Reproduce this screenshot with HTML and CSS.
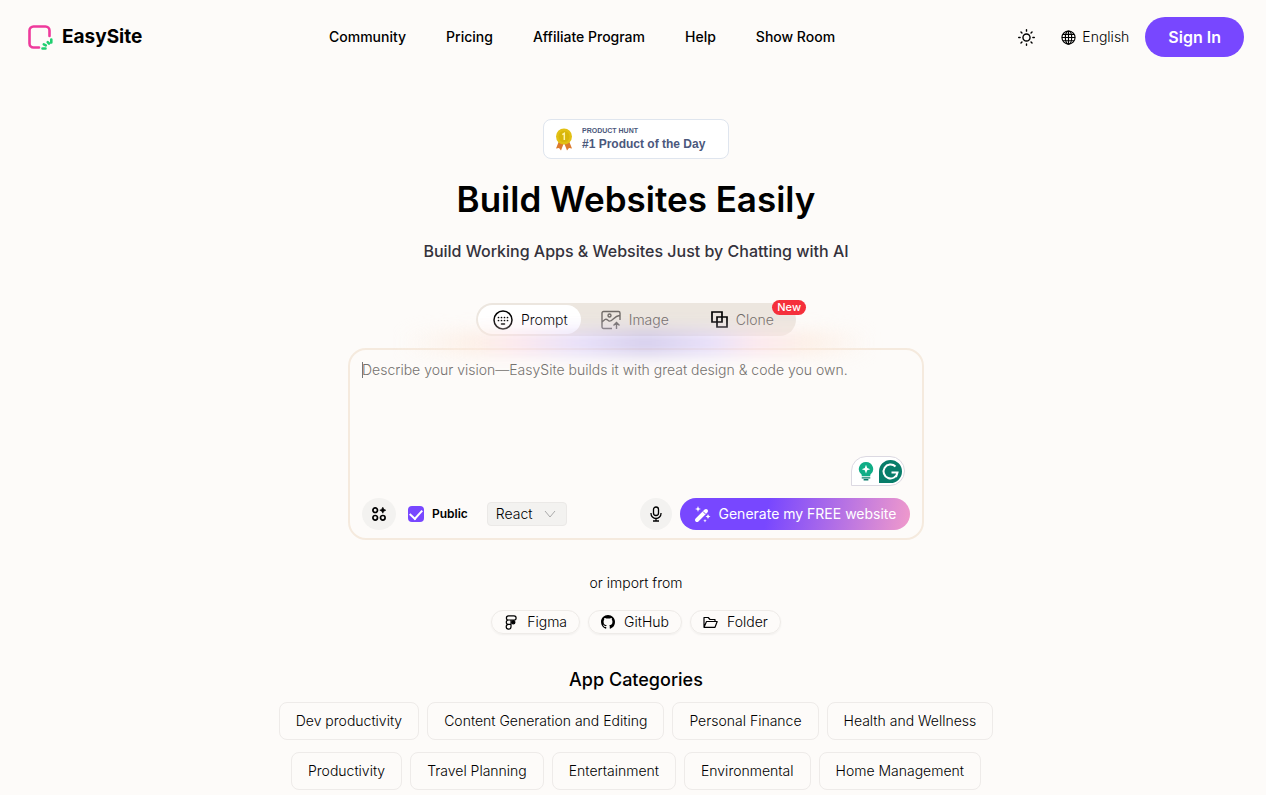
FILE: index.html
```html
<!DOCTYPE html>
<html lang="en">
<head>
<meta charset="utf-8">
<meta name="viewport" content="width=device-width, initial-scale=1">
<title>EasySite</title>
<link rel="stylesheet" href="styles.css">
</head>
<body>
<header class="header">
  <a class="logo" href="#">
    <svg width="26" height="26" viewBox="0 0 26 26" fill="none" stroke-linecap="round" stroke-width="2.600">
      <path stroke="#ee3a9c" d="M11 23.500H5.500A4 4 0 0 1 1.500 19.500V6.500A4 4 0 0 1 5.500 2.500H17.500a4 4 0 0 1 4 4V12"/>
      <path stroke="#20cf70" d="M23.300 15.500v3M14.500 24.500h3M19.700 18.200l1.300 1.300M15.800 20.300l2 1"/>
    </svg>
    <span>EasySite</span>
  </a>
  <nav class="nav">
    <a href="#">Community</a>
    <a href="#">Pricing</a>
    <a href="#">Affiliate Program</a>
    <a href="#">Help</a>
    <a href="#">Show Room</a>
  </nav>
  <div class="actions">
    <button class="plain" type="button" aria-label="Toggle theme">
      <svg width="17" height="17" viewBox="0 0 24 24" fill="none" stroke="#000" stroke-width="2" stroke-linecap="round"><circle cx="12" cy="12" r="5"/><path d="M12 1v2M12 21v2M1 12h2M21 12h2M4.200 4.200l1.400 1.400M18.400 18.400l1.400 1.400M4.200 19.800l1.400-1.400M18.400 5.600l1.400-1.400"/></svg>
    </button>
    <button class="plain language" type="button">
      <svg width="15" height="15" viewBox="0 0 16 16" fill="none" stroke="#000" stroke-width="1.200"><circle cx="8" cy="8" r="7"/><ellipse cx="8" cy="8" rx="3.400" ry="7"/><path d="M8 1v14M1 8h14M2 4.600h12M2 11.400h12"/></svg>
      <span>English</span>
    </button>
    <button class="sign-in" type="button">Sign In</button>
  </div>
</header>

<main class="main">
  <a class="award" href="#">
    <svg width="18" height="23" viewBox="0 0 18 23"><path fill="#dc7a2e" d="M4 13L1 20.500l3-.5 2 2.500L8.500 16h1l2.500 6.500 2-2.500 3 .5L14 13z"/><circle cx="9" cy="8.500" r="8" fill="#e2c013"/><circle cx="9" cy="8.500" r="5.500" fill="#d8b60a"/><path d="M7.300 6.600L9.300 5.300V12" fill="none" stroke="#fff3a8" stroke-width="1.500"/></svg>
    <span class="award-text"><small>PRODUCT HUNT</small><strong>#1 Product of the Day</strong></span>
  </a>
  <h1 class="title">Build Websites Easily</h1>
  <p class="subtitle">Build Working Apps &amp; Websites Just by Chatting with AI</p>

  <div class="tabs">
    <button class="tab active" type="button">
      <svg width="20" height="20" viewBox="0 0 20 20" fill="none" stroke="#000" stroke-width="1.500" stroke-linecap="round"><circle cx="10" cy="10" r="9"/><path stroke-width="1.700" d="M5.500 7.500h.01M8.500 7.500h.01M11.500 7.500h.01M14.500 7.500h.01M5.500 10.500h.01M8.500 10.500h.01M11.500 10.500h.01M14.500 10.500h.01"/><path d="M8.500 14h3"/></svg>
      <span>Prompt</span>
    </button>
    <button class="tab" type="button">
      <svg width="20" height="20" viewBox="0 0 20 20" fill="none" stroke="#706b67" stroke-width="1.400"><path d="M11 18.500H2.500A1.500 1.500 0 0 1 1 17V3a1.500 1.500 0 0 1 1.500-1.500h15A1.500 1.500 0 0 1 19 3v7M1 12l3-2.500c1.500-1 2.500.5 4 1.500 3 1.500 5-5 10.500-5.500M15.500 19v-6.500M12.500 15.500l3-3 3 3"/><circle cx="8.500" cy="5.500" r="1.500"/></svg>
      <span>Image</span>
    </button>
    <button class="tab clone" type="button">
      <svg width="17" height="17" viewBox="0 0 17 17" fill="none" stroke="#000" stroke-width="1.700"><path d="M1 1h10v10H1zM6 6h10v10H6z"/></svg>
      <span>Clone</span>
    </button>
    <span class="new">New</span>
  </div>

  <form class="composer">
    <div class="glow"></div>
    <textarea class="prompt" aria-label="Website description" placeholder="Describe your vision—EasySite builds it with great design &amp; code you own."></textarea>
    <i class="caret"></i>
    <div class="assistant">
      <svg width="16" height="19" viewBox="0 0 16 20"><path fill="#10ad86" d="M8 0a7.500 7.500 0 0 0-4.500 13.500V15h9v-1.500A7.500 7.500 0 0 0 8 0z"/><path fill="#fff" d="M8 3l1.300 3.200L12.500 7.500 9.300 8.800 8 12 6.700 8.800 3.500 7.500l3.200-1.300z"/><path stroke="#087d6a" stroke-width="1.500" d="M3.500 16.700h9M5.500 18.700h5"/></svg>
      <svg width="23" height="23" viewBox="0 0 23 23"><path fill="#087d6a" d="M11.500 0a11.500 11.500 0 0 1 0 23H0V11.500A11.500 11.500 0 0 1 11.500 0z"/><path fill="none" stroke="#fff" stroke-width="2" d="M16.500 6.500A7 7 0 1 0 18.500 12.500H12.500M18.500 12.500L17 17"/></svg>
    </div>
    <div class="toolbar">
      <button class="round" type="button" aria-label="Integrations">
        <svg width="14" height="14" viewBox="0 0 14 14" fill="none" stroke="#000" stroke-width="1.700"><circle cx="3.200" cy="3.200" r="2.300"/><circle cx="3.200" cy="10.800" r="2.300"/><circle cx="10.800" cy="10.800" r="2.300"/><path fill="#000" stroke="#000" stroke-width=".6" d="M10.800.2l1 2 2 1-2 1-1 2-1-2-2-1 2-1z"/></svg>
      </button>
      <label class="public"><input type="checkbox" checked><span>Public</span></label>
      <div class="framework">
        <select aria-label="Framework"><option>React</option></select>
        <svg width="12" height="8" viewBox="0 0 12 8" fill="none" stroke="#aaa"><path d="M1 1l5 6 5-6"/></svg>
      </div>
      <button class="round mic" type="button" aria-label="Voice input">
        <svg width="12" height="16" viewBox="0 0 12 16" fill="none" stroke="#000" stroke-width="1.300"><rect x="3.500" y="1" width="5" height="8.500" rx="2.500"/><path d="M1 7v.5a5 5 0 0 0 10 0V7M6 12.500V15M3 15h6"/></svg>
      </button>
      <button class="generate" type="button">
        <svg width="17" height="17" viewBox="0 0 17 17" fill="#fff"><path stroke="#fff" stroke-width="4" stroke-linecap="round" d="M3 14L12 5"/><path stroke="#8250f8" d="M9 5.500L11.500 8"/><path d="M4 0l.8 2.200L7 3l-2.200.8L4 6l-.8-2.200L1 3l2.200-.8zM14 8l.8 1.700 1.700.8-1.700.8L14 13l-.8-1.700-1.700-.8 1.700-.8zM11 13l.5 1.200 1.200.5-1.200.5L11 16.400l-.5-1.200-1.200-.5 1.200-.5z"/></svg>
        <span>Generate my FREE website</span>
      </button>
    </div>
  </form>

  <p class="import-label">or import from</p>
  <div class="imports">
    <button class="import" type="button">
      <svg width="14" height="15" viewBox="0 0 14 15" fill="none" stroke="#000" stroke-width="1.200"><path d="M4.500.8h5.500a2 2 0 0 1 0 4.200H4.500A2.100 2.100 0 0 1 4.500.8zM4.500 5H7v4.400H4.500A2.200 2.200 0 0 1 4.500 5zM4.500 9.400H7V12A2.400 2.400 0 1 1 4.500 9.400z"/><circle cx="9.300" cy="7.200" r="1.600" fill="#000"/></svg>
      <span>Figma</span>
    </button>
    <button class="import" type="button">
      <svg width="14" height="14" viewBox="0 0 16 16"><path d="M8 0C3.580 0 0 3.580 0 8c0 3.540 2.290 6.530 5.470 7.590.4.070.55-.17.55-.38 0-.19-.01-.82-.01-1.490-2.010.37-2.530-.49-2.690-.94-.09-.23-.48-.94-.82-1.130-.28-.15-.68-.52-.01-.53.63-.01 1.080.58 1.230.82.72 1.210 1.870.87 2.330.66.07-.52.28-.87.51-1.070-1.780-.2-3.640-.89-3.640-3.950 0-.87.31-1.590.82-2.150-.08-.2-.36-1.020.08-2.120 0 0 .67-.21 2.200.82a7.600 7.600 0 0 1 4 0c1.530-1.040 2.200-.82 2.200-.82.44 1.100.16 1.920.08 2.120.51.56.82 1.270.82 2.150 0 3.070-1.870 3.750-3.650 3.950.29.25.54.73.54 1.480 0 1.070-.01 1.930-.01 2.200 0 .21.15.46.55.38A8 8 0 0 0 16 8c0-4.420-3.580-8-8-8z"/></svg>
      <span>GitHub</span>
    </button>
    <button class="import" type="button">
      <svg width="15" height="13" viewBox="0 0 15 13" fill="none" stroke="#000" stroke-width="1.200" stroke-linejoin="round"><path d="M1 11V1.500h4.200L7 3.500h5V5.500M1 11.300L3.500 5.500H14.200L12 11.300z"/></svg>
      <span>Folder</span>
    </button>
  </div>

  <h2 class="categories-title">App Categories</h2>
  <div class="categories">
    <button type="button">Dev productivity</button>
    <button type="button">Content Generation and Editing</button>
    <button type="button">Personal Finance</button>
    <button type="button">Health and Wellness</button>
    <button type="button">Productivity</button>
    <button type="button">Travel Planning</button>
    <button type="button">Entertainment</button>
    <button type="button">Environmental</button>
    <button type="button">Home Management</button>
  </div>
</main>
</body>
</html>
```
FILE: styles.css
```css
* { box-sizing: border-box; }
body {
  margin: 0;
  background: #fdfbf9;
  color: #000;
  font: 300 14px/20px Inter, "Liberation Sans", sans-serif;
}
button, select, textarea { font: inherit; color: inherit; }
button { border: 0; background: none; padding: 0; white-space: nowrap; }
a { color: inherit; text-decoration: none; }
svg { flex: none; display: block; }
h1, h2, p { margin: 0; }

.header {
  display: grid;
  grid-template-columns: 301px 1fr auto;
  align-items: center;
  height: 74px;
  padding: 0 22px 0 28px;
}
.logo { display: flex; align-items: center; gap: 8px; font-size: 19px; font-weight: 700; }
.nav { display: flex; gap: 40px; font-weight: 500; white-space: nowrap; }
.actions { display: flex; align-items: center; gap: 16px; }
.plain { display: flex; align-items: center; gap: 6px; }
.language { margin-left: 10px; }
.sign-in {
  height: 40px;
  padding: 0 23px;
  border-radius: 20px;
  background: #7847ff;
  color: #fff;
  font-size: 16px;
  font-weight: 600;
}

.main {
  display: flex;
  flex-direction: column;
  align-items: center;
  padding: 45px 0 5px 6px;
}
.award {
  display: flex;
  align-items: center;
  gap: 9px;
  width: 186px;
  height: 40px;
  padding-left: 11px;
  border: 1px solid #dfe5ee;
  border-radius: 8px;
  background: #fff;
  color: #4b587c;
  font-family: "Liberation Sans", sans-serif;
}
.award-text { display: flex; flex-direction: column; white-space: nowrap; }
.award small { font-size: 7px; line-height: 10px; font-weight: 700; }
.award strong { font-size: 12px; line-height: 16px; font-weight: 700; }
.title { margin-top: 16px; font-size: 35px; line-height: 48px; font-weight: 600; }
.subtitle { margin-top: 16px; font-size: 16px; line-height: 24px; font-weight: 500; color: #34323c; }

.tabs {
  position: relative;
  display: flex;
  width: 320px;
  height: 33px;
  margin-top: 40px;
  padding: 2px;
  border-radius: 17px;
  background: #ece6df;
}
.tab { display: flex; align-items: center; gap: 8px; padding: 0 0 0 20px; color: #706b67; }
.tab.active { padding: 0 13px 0 15px; border-radius: 15px; background: #fff; color: #000; }
.tab.clone { padding-left: 42px; }
.new {
  position: absolute;
  top: -3px;
  right: -10px;
  padding: 0 5px;
  border-radius: 8px;
  background: #f52f3b;
  color: #fff;
  font-size: 11px;
  line-height: 15px;
  font-weight: 500;
}

.composer {
  position: relative;
  display: flex;
  flex-direction: column;
  width: 576px;
  margin-top: 12px;
  padding: 10px 12px 8px;
  border: 2px solid #f5eade;
  border-radius: 18px;
}
.glow {
  position: absolute;
  top: -18px;
  left: 50px;
  right: 50px;
  height: 22px;
  background: linear-gradient(90deg, #fdebd500, #fdebdf 16%, #fbdfe9 25%, #ded3fa 38%, #c3b9e8 52%, #ded3fa 66%, #fbdfe9 75%, #fdebdf 86%, #fdebd500);
  filter: blur(9px);
  opacity: .8;
  pointer-events: none;
}
.prompt {
  position: relative;
  width: 100%;
  height: 138px;
  padding: 0;
  border: 0;
  outline: 0;
  resize: none;
  background: none;
}
.prompt::placeholder { color: #75726f; opacity: 1; }
.caret { position: absolute; left: 12px; top: 12px; width: 1px; height: 16px; background: #777; }
.assistant {
  position: absolute;
  right: 17px;
  bottom: 52px;
  display: flex;
  align-items: center;
  gap: 5px;
  height: 30px;
  padding: 0 2px 0 6px;
  border: 1px solid #dcd9e2;
  border-radius: 15px 15px 15px 0;
  background: #fff;
}
.toolbar { display: flex; align-items: center; }
.round {
  display: grid;
  place-items: center;
  width: 34px;
  height: 32px;
  border-radius: 50%;
  background: #f3f2f0;
}
.mic { width: 32px; margin: 0 8px 0 auto; }
.public {
  display: flex;
  align-items: center;
  gap: 8px;
  margin-left: 12px;
  font-size: 12px;
  font-weight: 600;
}
.public input {
  display: grid;
  place-items: center;
  appearance: none;
  width: 16px;
  height: 16px;
  margin: 0;
  border-radius: 4px;
  background: #7847ff;
}
.public input:checked::after {
  content: "";
  width: 6px;
  height: 10px;
  margin-bottom: 3px;
  border: solid #fff;
  border-width: 0 2px 2px 0;
  transform: rotate(42deg);
}
.framework {
  display: grid;
  grid-template-columns: 1fr 20px;
  align-items: center;
  width: 80px;
  height: 24px;
  margin-left: 19px;
  border: 1px solid #ebe9e7;
  border-radius: 4px;
  background: #f3f2f0;
}
.framework select {
  grid-area: 1 / 1 / 2 / 3;
  height: 22px;
  padding: 0 0 0 8px;
  border: 0;
  background: none;
  appearance: none;
}
.framework svg { grid-area: 1 / 2; pointer-events: none; margin-left: -2px; }
.generate {
  display: flex;
  align-items: center;
  justify-content: center;
  gap: 8px;
  width: 230px;
  height: 32px;
  border-radius: 16px;
  background: linear-gradient(100deg, #7847ff 38%, #f09acb);
  color: #fff;
  font-weight: 400;
}

.import-label { margin-top: 33px; }
.imports { display: flex; gap: 8px; margin-top: 17px; }
.import {
  display: flex;
  align-items: center;
  gap: 9px;
  height: 24px;
  padding: 0 12px;
  border: 1px solid #eeebe8;
  border-radius: 12px;
  box-shadow: 0 1px 2px #0000000d;
}
.categories-title { margin-top: 34px; font-size: 18px; line-height: 24px; font-weight: 500; }
.categories {
  display: flex;
  flex-wrap: wrap;
  justify-content: center;
  gap: 12px 8px;
  max-width: 760px;
  margin-top: 10px;
}
.categories button {
  height: 38px;
  padding: 0 16px;
  border: 1px solid #eeebe9;
  border-radius: 8px;
}
```
